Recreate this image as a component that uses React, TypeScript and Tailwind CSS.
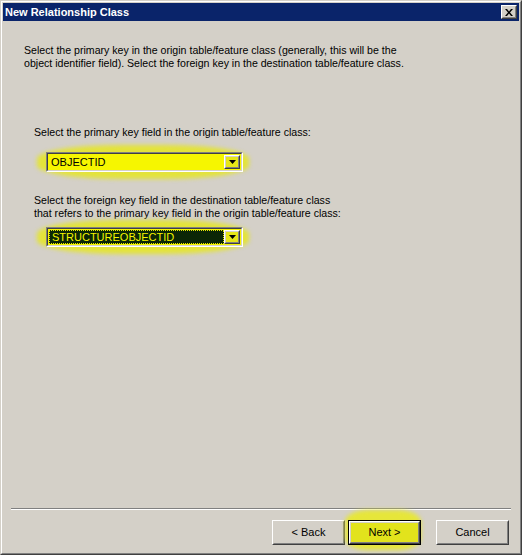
import type { ReactNode } from 'react';

const font = "font-['Liberation_Sans',Arial,sans-serif]";

function Raised({ children, className = '' }: { children: ReactNode; className?: string }) {
    return (
        <div className={`border border-t-white border-l-white border-r-[#404040] border-b-[#404040] ${className}`}>
            <div className="flex h-full w-full items-center justify-center border border-t-[#d4d0c8] border-l-[#d4d0c8] border-r-[#808080] border-b-[#808080]">
                {children}
            </div>
        </div>
    );
}

function Arrow() {
    return (
        <svg width="7" height="4" viewBox="0 0 7 4">
            <path d="M0 0h7L3.5 4z" fill="#000" />
        </svg>
    );
}

function Combo({ value, dark }: { value: string; dark?: boolean }) {
    return (
        <div className="relative w-[197px]">
            <div className="absolute -top-[7px] -left-[9px] h-[34px] w-[212px] rounded-[40%] bg-[#e3e33a] blur-[2px]" />
            <div className="relative flex h-[20px] w-[197px] border border-t-[#808080] border-l-[#808080] border-r-white border-b-white">
                <div className="flex flex-1 border border-t-[#404040] border-l-[#404040] border-r-[#d4d0c8] border-b-[#d4d0c8] bg-[#f6f600] p-[1px]">
                    <div
                        className={`flex flex-1 items-center px-[2px] text-[11px] ${
                            dark ? 'border border-dotted border-[#e8e800] bg-[#0b2606] text-[#f4f400]' : 'text-black'
                        }`}
                    >
                        {value}
                    </div>
                    <Raised className="h-[14px] w-[16px] bg-[#e6e618]">
                        <Arrow />
                    </Raised>
                </div>
            </div>
        </div>
    );
}

function Button({ label, primary }: { label: string; primary?: boolean }) {
    if (primary) {
        return (
            <div className="relative">
                <div className="absolute -top-[10px] -left-[3px] h-[40px] w-[76px] rounded-[30%] bg-[#e6e63a] blur-[2px]" />
                <div className="relative h-[25px] w-[73px] border border-black">
                    <Raised className="h-full w-full bg-[#e2e31c]">
                        <span className="text-[11px] text-black">{label}</span>
                    </Raised>
                </div>
            </div>
        );
    }
    return (
        <Raised className="h-[25px] w-[73px] bg-[#d4d0c8]">
            <span className="text-[11px] text-black">{label}</span>
        </Raised>
    );
}

export default function App() {
    return (
        <div className={`h-[556px] w-[524px] bg-white ${font}`}>
            <div className="flex h-[555px] w-[522px] flex-col border border-t-[#d4d0c8] border-l-[#d4d0c8] border-r-[#404040] border-b-[#404040] bg-[#d4d0c8]">
                <div className="flex flex-1 flex-col border border-t-white border-l-white border-r-[#808080] border-b-[#808080] p-[1px]">
                    <div className="flex h-[18px] items-center justify-between bg-[#0a246a] pr-[2px] pl-[2px]">
                        <span className="text-[11px] font-bold text-white">New Relationship Class</span>
                        <Raised className="h-[14px] w-[16px] bg-[#d4d0c8]">
                            <svg width="8" height="7" viewBox="0 0 8 7">
                                <path d="M0 0h2l2 2.5L6 0h2L5 3.5 8 7H6L4 4.5 2 7H0l3-3.5z" fill="#000" />
                            </svg>
                        </Raised>
                    </div>

                    <div className="flex flex-1 flex-col">
                        <p className="mt-[23px] ml-[21px] text-[10.6px] leading-[13px] text-black">
                            Select the primary key in the origin table/feature class (generally, this will be the
                            <br />
                            object identifier field). Select the foreign key in the destination table/feature class.
                        </p>

                        <p className="mt-[56px] ml-[31px] text-[10.6px] leading-[13px] text-black">
                            Select the primary key field in the origin table/feature class:
                        </p>
                        <div className="mt-[13px] ml-[43px]">
                            <Combo value="OBJECTID" />
                        </div>

                        <p className="mt-[22px] ml-[31px] text-[10.6px] leading-[13px] text-black">
                            Select the foreign key field in the destination table/feature class
                            <br />
                            that refers to the primary key field in the origin table/feature class:
                        </p>
                        <div className="mt-[7px] ml-[43px]">
                            <Combo value="STRUCTUREOBJECTID" dark />
                        </div>

                        <div className="flex-1" />

                        <div className="mx-[8px] border-t border-b border-t-[#808080] border-b-white" />

                        <div className="mt-[10px] mb-[7px] flex justify-end gap-[3px] pr-[10px]">
                            <Button label="< Back" />
                            <Button label="Next >" primary />
                            <div className="w-[9px]" />
                            <Button label="Cancel" />
                        </div>
                    </div>
                </div>
            </div>
        </div>
    );
}
